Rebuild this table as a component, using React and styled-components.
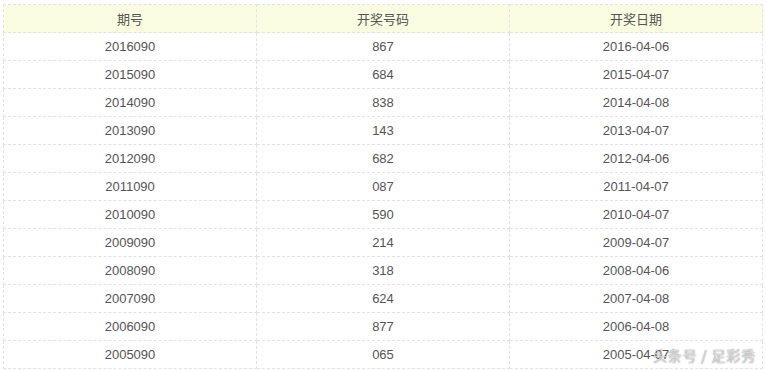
import React from "react";
import styled, { createGlobalStyle } from "styled-components";

const GlobalStyle = createGlobalStyle`
  html, body {
    margin: 0;
    padding: 0;
    background: #fff;
  }
  body {
    font-family: "Liberation Sans", Arial, "Noto Sans CJK SC", sans-serif;
  }
`;

const Wrapper = styled.div`
  position: relative;
  width: 766px;
  height: 371px;
  padding: 4px 3px 0 3px;
  box-sizing: border-box;
  overflow: hidden;
`;

const Table = styled.table`
  width: 760px;
  border-collapse: collapse;
  table-layout: fixed;
  color: #555;
  font-size: 13px;
`;

const HeadCell = styled.th`
  height: 27px;
  padding: 0;
  background: #fafde2;
  font-weight: normal;
  text-align: center;
  border: 1px dashed #e2e2e2;
  font-family: "Noto Sans CJK SC", sans-serif;
  font-size: 13px;
  color: #555;
`;

const Cell = styled.td`
  height: 27px;
  padding: 0;
  text-align: center;
  border: 1px dashed #e2e2e2;
`;

const Watermark = styled.div`
  position: absolute;
  right: 10px;
  bottom: 6px;
  font-family: "Noto Sans CJK SC", sans-serif;
  font-size: 14px;
  color: rgba(240, 240, 240, 0.8);
  text-shadow: 0 0 1px rgba(0, 0, 0, 0.45), 0 0 2px rgba(0, 0, 0, 0.25);
  letter-spacing: 0.8px;
`;

const rows = [
  ["2016090", "867", "2016-04-06"],
  ["2015090", "684", "2015-04-07"],
  ["2014090", "838", "2014-04-08"],
  ["2013090", "143", "2013-04-07"],
  ["2012090", "682", "2012-04-06"],
  ["2011090", "087", "2011-04-07"],
  ["2010090", "590", "2010-04-07"],
  ["2009090", "214", "2009-04-07"],
  ["2008090", "318", "2008-04-06"],
  ["2007090", "624", "2007-04-08"],
  ["2006090", "877", "2006-04-08"],
  ["2005090", "065", "2005-04-07"],
];

export default function App() {
  return (
    <>
      <GlobalStyle />
      <Wrapper>
        <Table>
          <thead>
            <tr>
              <HeadCell>期号</HeadCell>
              <HeadCell>开奖号码</HeadCell>
              <HeadCell>开奖日期</HeadCell>
            </tr>
          </thead>
          <tbody>
            {rows.map((row) => (
              <tr key={row[0]}>
                {row.map((value, i) => (
                  <Cell key={i}>{value}</Cell>
                ))}
              </tr>
            ))}
          </tbody>
        </Table>
        <Watermark>头条号 / 足彩秀</Watermark>
      </Wrapper>
    </>
  );
}
